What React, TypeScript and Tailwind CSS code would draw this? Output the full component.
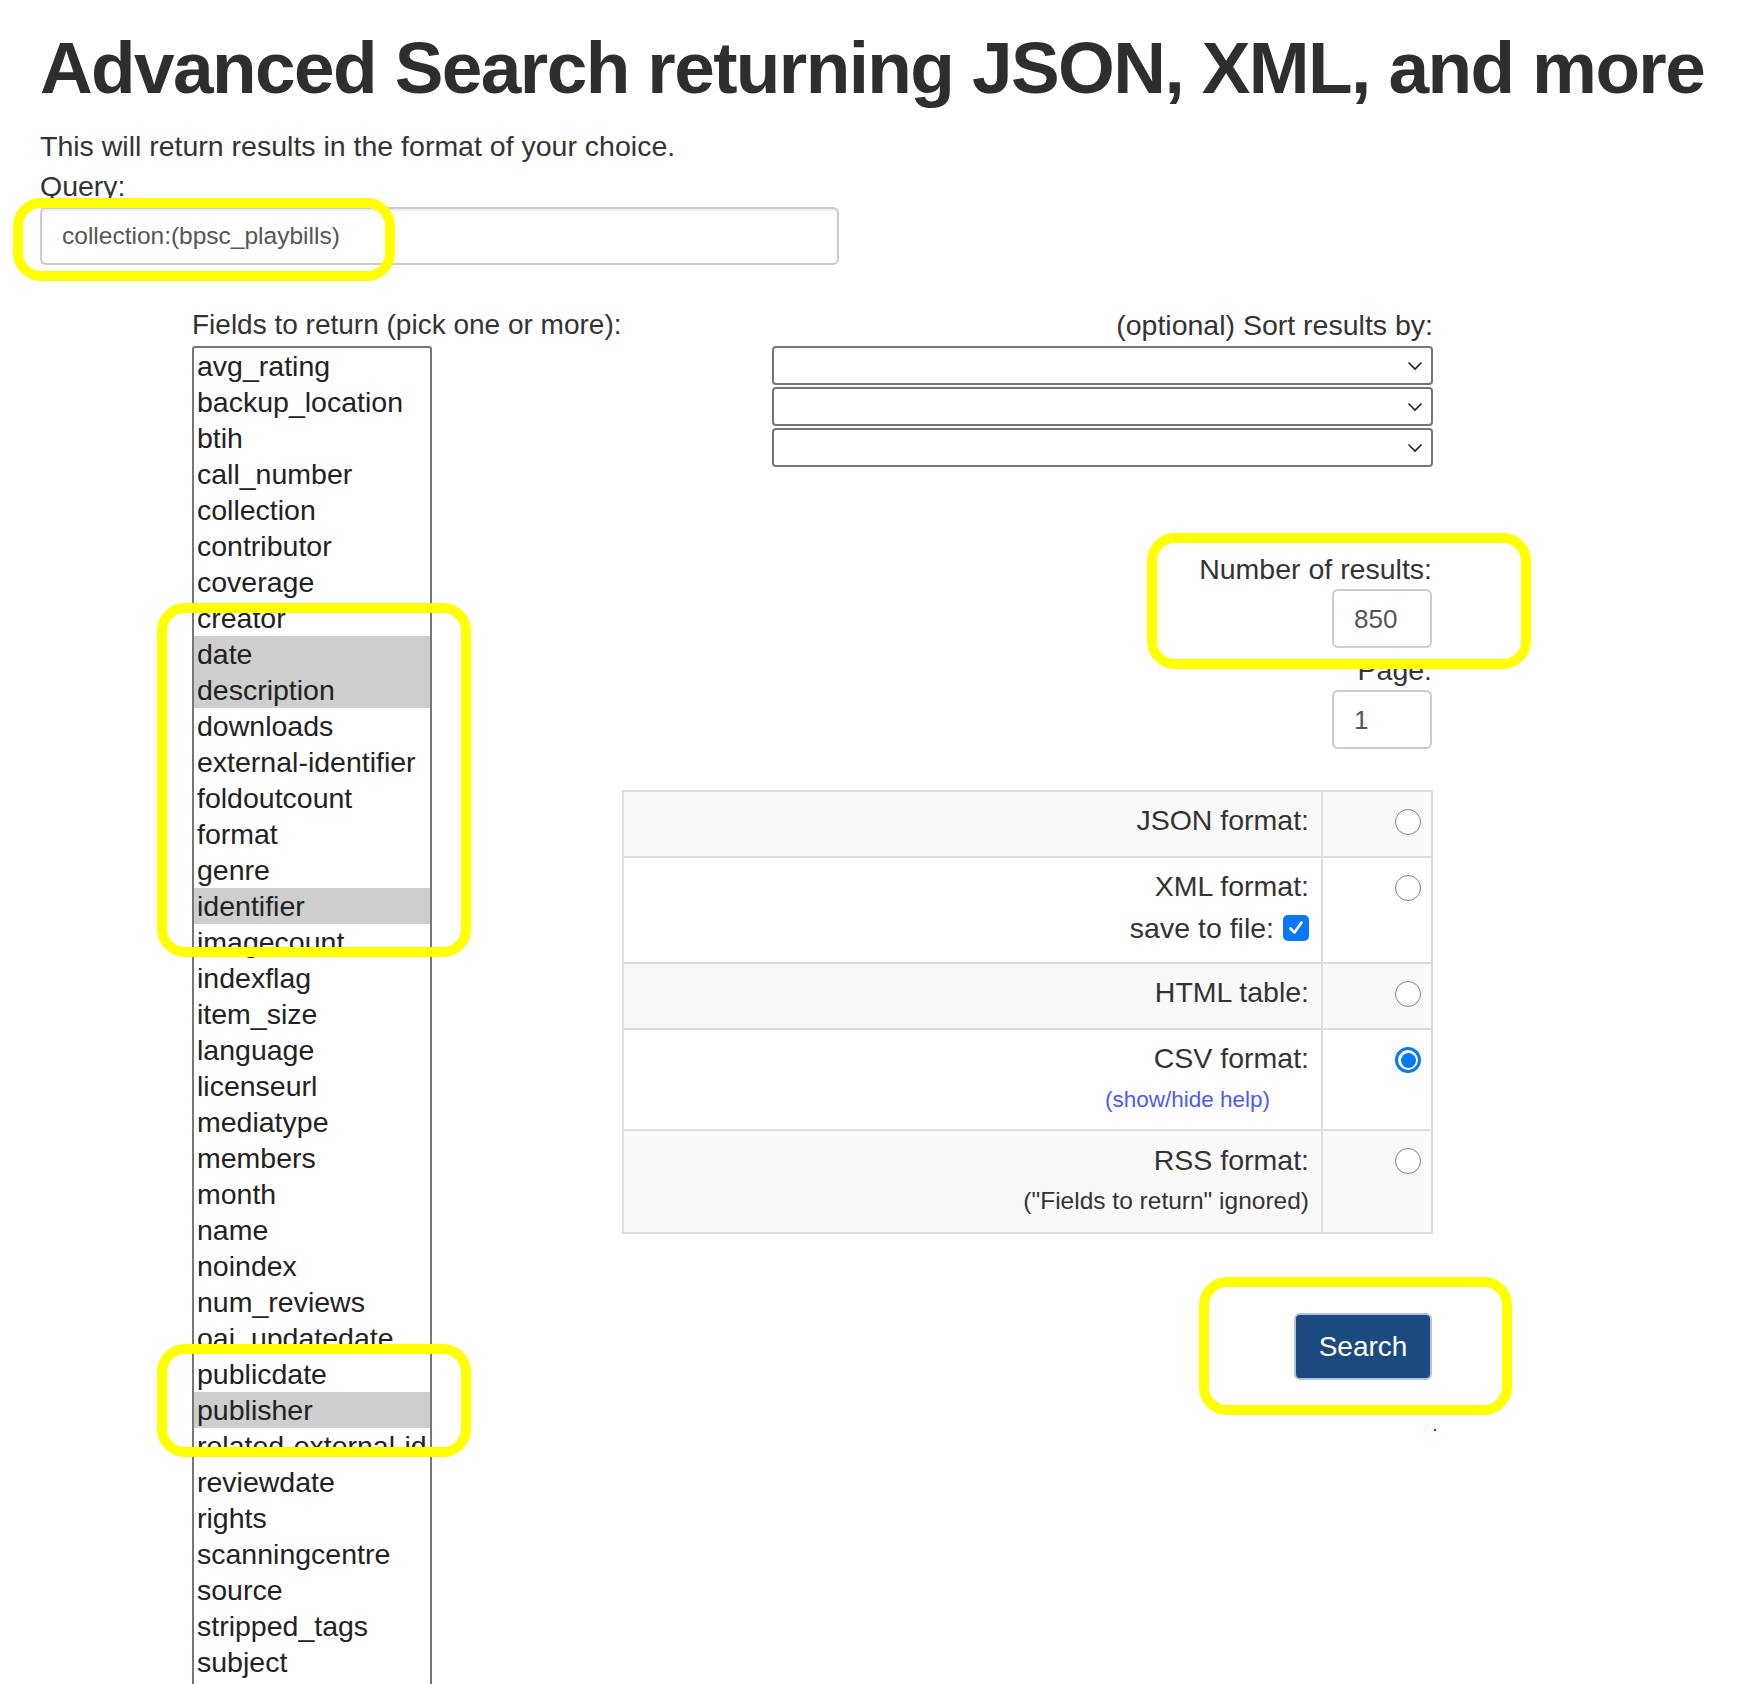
import React from 'react';

const FIELDS = [
  'avg_rating', 'backup_location', 'btih', 'call_number', 'collection', 'contributor', 'coverage',
  'creator', 'date', 'description', 'downloads', 'external-identifier', 'foldoutcount', 'format',
  'genre', 'identifier', 'imagecount', 'indexflag', 'item_size', 'language', 'licenseurl',
  'mediatype', 'members', 'month', 'name', 'noindex', 'num_reviews', 'oai_updatedate',
  'publicdate', 'publisher', 'related-external-id', 'reviewdate', 'rights', 'scanningcentre',
  'source', 'stripped_tags', 'subject',
];

const SELECTED = new Set(['date', 'description', 'identifier', 'publisher']);

// annotation frames drawn over the form
const MARKS = [
  'left-[13px] top-[198px] w-[382px] h-[83px]',
  'left-[157px] top-[603px] w-[314px] h-[354px]',
  'left-[157px] top-[1344px] w-[314px] h-[113px]',
  'left-[1147px] top-[533px] w-[384px] h-[136px]',
  'left-[1199px] top-[1277px] w-[313px] h-[138px]',
];

const Chevron: React.FC = () => (
  <svg width="16" height="10" viewBox="0 0 16 10" className="mr-[8px]">
    <path d="M1.5 1.5 L8 8 L14.5 1.5" fill="none" stroke="#222" strokeWidth="1.6" />
  </svg>
);

const Radio: React.FC<{ checked?: boolean }> = ({ checked }) =>
  checked ? (
    <div className="w-[26px] h-[26px] rounded-full border-[3px] border-[#0a77f6] bg-white flex items-center justify-center">
      <div className="w-[15px] h-[15px] rounded-full bg-[#0a77f6]" />
    </div>
  ) : (
    <div className="w-[26px] h-[26px] rounded-full border-[1.5px] border-[#808080] bg-white" />
  );

const FormatRow: React.FC<{ h: string; bg: string; checked?: boolean; children: React.ReactNode }> = ({
  h,
  bg,
  checked,
  children,
}) => (
  <div className={`flex border-t-2 border-[#ddd] ${h} ${bg}`}>
    <div className="flex-1 border-r-2 border-[#ddd] pr-[12px] pt-[8px] text-right">{children}</div>
    <div className="w-[108px] pl-[72px] pt-[17px]">
      <Radio checked={checked} />
    </div>
  </div>
);

const App: React.FC = () => {
  return (
    <div className="relative w-[1752px] h-[1684px] overflow-hidden bg-white text-[#333] font-['Liberation_Sans',Arial,sans-serif] text-[28.5px] leading-[40px]">
      <div className="pl-[40px] pt-[27px]">
        <h1 className="text-[73px] font-bold leading-[81px] tracking-[-1.6px] text-[#2e2e2e] whitespace-nowrap">
          Advanced Search returning JSON, XML, and more
        </h1>
        <p className="mt-[18px]">This will return results in the format of your choice.</p>
        <div>Query:</div>
        <div className="mt-[1px] w-[799px] h-[58px] border-2 border-[#ccc] rounded-[6px] pl-[20px] flex items-center text-[24.5px] text-[#555] shadow-[inset_0_2px_2px_rgba(0,0,0,0.075)]">
          collection:(bpsc_playbills)
        </div>
      </div>

      <div className="flex mt-[40px]">
        {/* fields list */}
        <div className="ml-[192px] w-[430px]">
          <div className="whitespace-nowrap text-[28px]">Fields to return (pick one or more):</div>
          <div className="mt-[1px] w-[240px] h-[1400px] border-2 border-[#767676] rounded-t-[3px] overflow-hidden">
            {FIELDS.map((f) => (
              <div
                key={f}
                className={`h-[36px] leading-[36px] pl-[3px] whitespace-nowrap text-[#222] ${SELECTED.has(f) ? 'bg-[#cecece]' : ''}`}
              >
                {f}
              </div>
            ))}
          </div>
        </div>

        {/* options */}
        <div className="w-[811px] flex flex-col">
          <div className="text-right">(optional) Sort results by:</div>
          <div className="ml-[150px] mt-[1px] flex flex-col gap-[2px]">
            {[0, 1, 2].map((i) => (
              <div
                key={i}
                className="h-[39px] border-2 border-[#767676] rounded-[4px] bg-white flex items-center justify-end"
              >
                <Chevron />
              </div>
            ))}
          </div>

          <div className="mt-[82px] mr-[1px] text-right">Number of results:</div>
          <div className="self-end mr-[1px] w-[100px] h-[59px] border-2 border-[#ccc] rounded-[6px] pl-[20px] flex items-center text-[26px] text-[#555]">
            850
          </div>
          <div className="mt-[2px] mr-[1px] text-right">Page:</div>
          <div className="self-end mr-[1px] w-[100px] h-[59px] border-2 border-[#ccc] rounded-[6px] pl-[20px] flex items-center text-[26px] text-[#555]">
            1
          </div>

          <div className="mt-[41px] border-x-2 border-b-2 border-[#ddd]">
            <FormatRow h="h-[66px]" bg="bg-[#f9f9f9]">
              JSON format:
            </FormatRow>
            <FormatRow h="h-[106px]" bg="bg-white">
              <div>XML format:</div>
              <div className="mt-[2px] flex items-center justify-end">
                save to file:
                <div className="ml-[9px] w-[26px] h-[26px] rounded-[5px] bg-[#0a77f6] flex items-center justify-center">
                  <svg width="18" height="18" viewBox="0 0 18 18">
                    <path d="M3.5 9.5 L7.5 13.5 L14.5 3.5" fill="none" stroke="#fff" strokeWidth="2.6" strokeLinecap="round" strokeLinejoin="round" />
                  </svg>
                </div>
              </div>
            </FormatRow>
            <FormatRow h="h-[66px]" bg="bg-[#f9f9f9]">
              HTML table:
            </FormatRow>
            <FormatRow h="h-[101px]" bg="bg-white" checked>
              <div>CSV format:</div>
              <div className="mt-[2px] mr-[39px] text-[22.5px] text-[#4b5cf6]">(show/hide help)</div>
            </FormatRow>
            <FormatRow h="h-[103px]" bg="bg-[#f9f9f9]">
              <div className="pt-[1px]">RSS format:</div>
              <div className="mt-[1px] text-[24.5px]">("Fields to return" ignored)</div>
            </FormatRow>
          </div>

          <button className="mt-[79px] self-end mr-[1px] w-[138px] h-[67px] rounded-[6px] border-2 border-[#b5c3d6] bg-[#1a4a80] text-white text-[28px]">
            Search
          </button>
        </div>
      </div>

      {MARKS.map((m) => (
        <div key={m} className={`absolute ${m} border-[10px] border-[#ffff00] rounded-[28px] pointer-events-none`} />
      ))}
      <div className="absolute left-[1434px] top-[1429px] w-[2px] h-[2px] bg-[#ff0000]" />
    </div>
  );
};

export default App;
